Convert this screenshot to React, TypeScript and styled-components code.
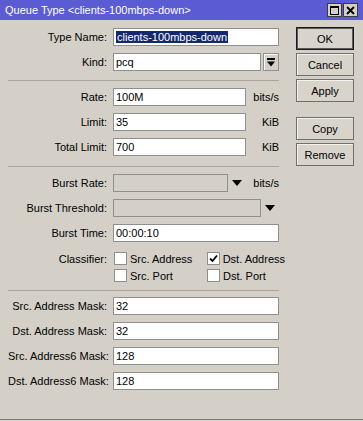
import styled, { createGlobalStyle } from 'styled-components';

const GlobalStyle = createGlobalStyle`
  html, body {
    margin: 0;
    padding: 0;
    background: #d4d0c8;
  }
  body {
    font-family: "Liberation Sans", Arial, sans-serif;
    font-size: 11px;
    color: #000;
  }
`;

const Window = styled.div`
  width: 363px;
  height: 420px;
  box-sizing: border-box;
  border-bottom: 1px solid #7a7a7a;
  background: #d4d0c8;
  display: flex;
  flex-direction: column;
`;

const TitleBar = styled.div`
  height: 20px;
  background: #5b5bd4;
  color: #fff;
  display: flex;
  align-items: center;
  padding: 0 5px;
`;

const Title = styled.div`
  flex: 1;
  font-size: 11px;
  white-space: nowrap;
`;

const TitleButtons = styled.div`
  display: flex;
  gap: 1px;
`;

const TitleButton = styled.div`
  width: 15px;
  height: 14px;
  box-sizing: border-box;
  background: #d4d0c8;
  border: 1px solid #3a3a3a;
  display: flex;
  align-items: center;
  justify-content: center;
`;

const Body = styled.div`
  display: flex;
  gap: 17px;
  padding: 8px 9px 0 8px;
`;

const Form = styled.div`
  width: 271px;
  display: flex;
  flex-direction: column;
`;

const Section = styled.div`
  display: flex;
  flex-direction: column;
  gap: 7px;
`;

const Separator = styled.div<{ $top: number; $bottom: number }>`
  height: 1px;
  background: #aaa69e;
  margin: ${p => p.$top}px 0 ${p => p.$bottom}px;
`;

const Row = styled.div`
  display: grid;
  grid-template-columns: 99px 166px;
  column-gap: 6px;
  align-items: center;
  height: 18px;
`;

const Label = styled.div`
  text-align: right;
  white-space: nowrap;
`;

const Field = styled.div`
  display: flex;
  height: 18px;
`;

const TextBox = styled.div<{ $disabled?: boolean }>`
  flex: 1;
  box-sizing: border-box;
  height: 18px;
  border: 1px solid #8f8f8f;
  background: ${p => (p.$disabled ? '#d4d0c8' : '#fff')};
  padding-left: 2px;
  line-height: 16px;
  white-space: nowrap;
  overflow: hidden;
`;

const Selected = styled.span`
  background: #14286e;
  color: #fff;
  padding: 0 1px;
`;

const Unit = styled.div`
  width: 33px;
  text-align: right;
  line-height: 18px;
`;

const ArrowCell = styled.div`
  width: 18px;
  display: flex;
  align-items: center;
  justify-content: center;
`;

const DropButton = styled.div`
  width: 16px;
  margin-left: 2px;
  box-sizing: border-box;
  border: 1px solid #8f8f8f;
  box-shadow: inset 1px 1px #fff;
  background: #d4d0c8;
  display: flex;
  align-items: center;
  justify-content: center;
`;

const ClassifierGrid = styled.div`
  display: grid;
  grid-template-columns: 99px 87px 79px;
  grid-auto-rows: 17px;
  column-gap: 6px;
  align-items: center;
  margin-top: 8px;
`;

const Check = styled.label`
  display: flex;
  align-items: center;
  gap: 3px;
  padding-left: 1px;
  white-space: nowrap;
`;

const Box = styled.span`
  width: 13px;
  height: 13px;
  box-sizing: border-box;
  border: 1px solid #8f8f8f;
  background: #fff;
  display: flex;
  align-items: center;
  justify-content: center;
`;

const Buttons = styled.div`
  width: 58px;
  display: flex;
  flex-direction: column;
  gap: 3px;
  padding-top: -1px;
  margin-top: -1px;
`;

const Button = styled.div<{ $default?: boolean; $gapBefore?: boolean }>`
  height: 23px;
  box-sizing: border-box;
  border: 1px solid ${p => (p.$default ? '#1a1a1a' : '#6f6f6f')};
  box-shadow: ${p => (p.$default ? 'inset 0 0 0 1px #5a5a5a' : 'inset 1px 1px #f4f2ee')};
  background: #d8d4cc;
  display: flex;
  align-items: center;
  justify-content: center;
  margin-top: ${p => (p.$gapBefore ? '12px' : '0')};
`;

const DownArrow = () => (
  <svg width="10" height="6" viewBox="0 0 10 6">
    <path d="M0 0 L10 0 L5 6 Z" fill="#000" />
  </svg>
);

const BarArrow = () => (
  <svg width="8" height="9" viewBox="0 0 8 9">
    <rect x="0" y="0" width="8" height="2" fill="#000" />
    <path d="M0 3.5 L8 3.5 L4 8.5 Z" fill="#000" />
  </svg>
);

const CheckBox = ({ checked, label }: { checked?: boolean; label: string }) => (
  <Check>
    <Box>
      {checked && (
        <svg width="9" height="9" viewBox="0 0 9 9">
          <path d="M1 4.5 L3.5 7 L8 1.5" stroke="#000" strokeWidth="1.8" fill="none" />
        </svg>
      )}
    </Box>
    {label}
  </Check>
);

const MASKS = [
  { label: 'Src. Address Mask:', value: '32' },
  { label: 'Dst. Address Mask:', value: '32' },
  { label: 'Src. Address6 Mask:', value: '128' },
  { label: 'Dst. Address6 Mask:', value: '128' },
];

export default function App() {
  return (
    <>
      <GlobalStyle />
      <Window>
        <TitleBar>
          <Title>Queue Type &lt;clients-100mbps-down&gt;</Title>
          <TitleButtons>
            <TitleButton>
              <svg width="9" height="9" viewBox="0 0 9 9">
                <rect x="0.5" y="0.5" width="8" height="8" fill="none" stroke="#000" />
                <rect x="0.5" y="0.5" width="8" height="1.5" fill="#000" />
              </svg>
            </TitleButton>
            <TitleButton>
              <svg width="9" height="9" viewBox="0 0 9 9">
                <path d="M1 1 L8 8 M8 1 L1 8" stroke="#000" strokeWidth="1.8" />
              </svg>
            </TitleButton>
          </TitleButtons>
        </TitleBar>
        <Body>
          <Form>
            <Section>
              <Row>
                <Label>Type Name:</Label>
                <Field>
                  <TextBox>
                    <Selected>clients-100mbps-down</Selected>
                  </TextBox>
                </Field>
              </Row>
              <Row>
                <Label>Kind:</Label>
                <Field>
                  <TextBox>pcq</TextBox>
                  <DropButton>
                    <BarArrow />
                  </DropButton>
                </Field>
              </Row>
            </Section>
            <Separator $top={9} $bottom={7} />
            <Section>
              <Row>
                <Label>Rate:</Label>
                <Field>
                  <TextBox>100M</TextBox>
                  <Unit>bits/s</Unit>
                </Field>
              </Row>
              <Row>
                <Label>Limit:</Label>
                <Field>
                  <TextBox>35</TextBox>
                  <Unit>KiB</Unit>
                </Field>
              </Row>
              <Row>
                <Label>Total Limit:</Label>
                <Field>
                  <TextBox>700</TextBox>
                  <Unit>KiB</Unit>
                </Field>
              </Row>
            </Section>
            <Separator $top={10} $bottom={7} />
            <Section>
              <Row>
                <Label>Burst Rate:</Label>
                <Field>
                  <TextBox $disabled />
                  <ArrowCell>
                    <DownArrow />
                  </ArrowCell>
                  <Unit>bits/s</Unit>
                </Field>
              </Row>
              <Row>
                <Label>Burst Threshold:</Label>
                <Field>
                  <TextBox $disabled />
                  <ArrowCell>
                    <DownArrow />
                  </ArrowCell>
                </Field>
              </Row>
              <Row>
                <Label>Burst Time:</Label>
                <Field>
                  <TextBox>00:00:10</TextBox>
                </Field>
              </Row>
            </Section>
            <ClassifierGrid>
              <Label>Classifier:</Label>
              <CheckBox label="Src. Address" />
              <CheckBox label="Dst. Address" checked />
              <span />
              <CheckBox label="Src. Port" />
              <CheckBox label="Dst. Port" />
            </ClassifierGrid>
            <Separator $top={6} $bottom={6} />
            <Section>
              {MASKS.map(m => (
                <Row key={m.label}>
                  <Label>{m.label}</Label>
                  <Field>
                    <TextBox>{m.value}</TextBox>
                  </Field>
                </Row>
              ))}
            </Section>
          </Form>
          <Buttons>
            <Button $default>OK</Button>
            <Button>Cancel</Button>
            <Button>Apply</Button>
            <Button $gapBefore>Copy</Button>
            <Button>Remove</Button>
          </Buttons>
        </Body>
      </Window>
    </>
  );
}
